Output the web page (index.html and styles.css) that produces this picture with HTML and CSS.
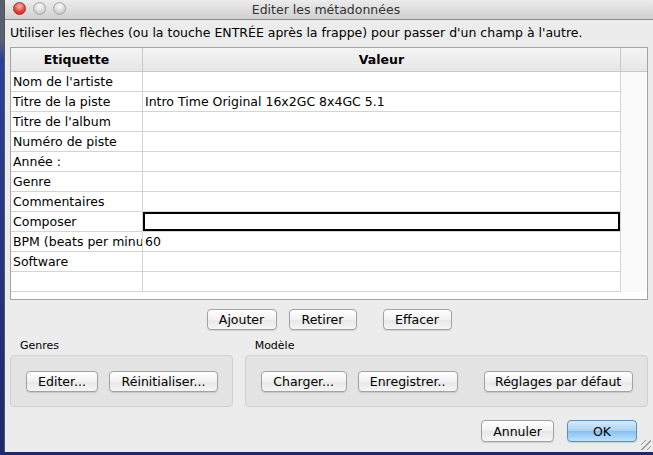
FILE: index.html
```html
<!DOCTYPE html>
<html lang="fr">
<head>
  <meta charset="UTF-8">
  <title>Editer les métadonnées</title>
  <link rel="stylesheet" href="styles.css">
</head>
<body>

<div class="window">
  <div class="titlebar">
    <div class="lights">
      <span class="light close"></span>
      <span class="light"></span>
      <span class="light"></span>
    </div>
    <div class="title">Editer les métadonnées</div>
    <div></div>
  </div>

  <div class="content">
    <p class="hint">Utiliser les flèches (ou la touche ENTRÉE après la frappe) pour passer d'un champ à l'autre.</p>

    <div class="grid-box">
      <table class="tags">
        <thead>
          <tr>
            <th class="col-label">Etiquette</th>
            <th class="col-value">Valeur</th>
            <th class="col-corner"></th>
          </tr>
        </thead>
        <tbody>
          <tr><td>Nom de l'artiste</td><td></td><td class="filler"></td></tr>
          <tr><td>Titre de la piste</td><td>Intro Time Original 16x2GC 8x4GC 5.1</td><td class="filler"></td></tr>
          <tr><td>Titre de l'album</td><td></td><td class="filler"></td></tr>
          <tr><td>Numéro de piste</td><td></td><td class="filler"></td></tr>
          <tr><td>Année :</td><td></td><td class="filler"></td></tr>
          <tr><td>Genre</td><td></td><td class="filler"></td></tr>
          <tr><td>Commentaires</td><td></td><td class="filler"></td></tr>
          <tr><td>Composer</td><td class="editing"></td><td class="filler"></td></tr>
          <tr><td>BPM (beats per minu</td><td>60</td><td class="filler"></td></tr>
          <tr><td>Software</td><td></td><td class="filler"></td></tr>
          <tr><td></td><td></td><td class="filler"></td></tr>
        </tbody>
      </table>
    </div>

    <div class="row-actions">
      <button class="btn w-ajouter">Ajouter</button>
      <button class="btn w-retirer">Retirer</button>
      <button class="btn w-effacer spaced">Effacer</button>
    </div>

    <div class="groups">
      <div class="group genres">
        <div class="group-label">Genres</div>
        <div class="group-box">
          <button class="btn w-editer">Editer...</button>
          <button class="btn w-reinit">Réinitialiser...</button>
        </div>
      </div>
      <div class="group modele">
        <div class="group-label">Modèle</div>
        <div class="group-box">
          <button class="btn w-charger">Charger...</button>
          <button class="btn w-enreg">Enregistrer..</button>
          <button class="btn w-defaut spaced">Réglages par défaut</button>
        </div>
      </div>
    </div>

    <div class="row-footer">
      <button class="btn w-annuler">Annuler</button>
      <button class="btn primary w-ok">OK</button>
    </div>
  </div>
  <div class="grip"></div>
</div>

</body>
</html>
```

FILE: styles.css
```css
body { margin: 0; background: linear-gradient(#5a5f70 0, #5a5f70 40px, #2d3f96 60px, #1c2a6a 100%); height: 455px; overflow: hidden; font-family: "DejaVu Sans", sans-serif; font-size: 12.5px; color: #000; }
.window { position: relative; margin-left: 4px; width: 649px; height: 452px; background: #ececec; border-left: 1px solid #555; box-sizing: border-box; }

.titlebar { height: 19px; border-bottom: 1px solid #8c8c8c; background: linear-gradient(#ececec, #d0d0d0); display: grid; grid-template-columns: 1fr auto 1fr; align-items: center; }
.lights { display: flex; gap: 7px; padding-left: 8px; margin-top: -3px; }
.light { width: 13px; height: 13px; border-radius: 50%; background: radial-gradient(circle at 50% 30%, #fdfdfd, #cfcfcf 70%, #b8b8b8); border: 1px solid #a8a8a8; box-sizing: border-box; }
.light.close { background: radial-gradient(circle at 50% 30%, #ffc0b8, #e5483a 55%, #b3261c); border-color: #a03228; }
.title { color: #333; font-size: 12.5px; padding-right: 6px; }

.content { padding: 0 5px 0 5px; }
.hint { margin: 0; height: 26px; line-height: 24px; padding-top: 1px; white-space: nowrap; }

.grid-box { border: 1px solid #a3a3a3; background: #fff; height: 251px; }
.tags { border-collapse: collapse; width: 100%; table-layout: fixed; }
.tags th { height: 23px; background: linear-gradient(#f4f4f4, #e6e6e6); border-bottom: 1px solid #c8c8c8; border-right: 1px solid #c8c8c8; font-weight: bold; padding: 0; }
.tags th.col-corner { border-right: none; }
.col-label { width: 131px; }
.col-value { width: 477px; }
.tags td { height: 19px; padding: 0 0 0 2px; border-bottom: 1px solid #d4d4d4; border-right: 1px solid #d4d4d4; white-space: nowrap; overflow: hidden; line-height: 19px; }
.tags td.filler { border: none; background: #fafafa; }
.tags td.editing { box-shadow: inset 0 0 0 2px #000; }

.btn { font-family: "DejaVu Sans", sans-serif; font-size: 12.5px; color: #000; height: 21px; padding: 0; border: 1px solid #a2a2a2; border-radius: 4px; background: linear-gradient(#ffffff, #f1f1f1 50%, #e6e6e6 51%, #f6f6f6); box-shadow: 0 1px 1px rgba(0,0,0,0.12); }
.btn.primary { background: linear-gradient(#d6ebfb, #a8d2f4 50%, #86c0ef 51%, #bfe2fb); border-color: #5f8fc2; }

.row-actions { display: flex; justify-content: center; gap: 12px; padding-top: 9px; }
.row-actions .spaced { margin-left: 14px; }
.w-ajouter { width: 70px; }
.w-retirer { width: 68px; }
.w-effacer { width: 69px; }

.groups { display: flex; gap: 12px; margin-top: 8px; }
.group-label { font-size: 11px; padding-left: 10px; height: 17px; line-height: 16px; }
.group-box { height: 52px; border: 1px solid #d0d0d0; border-radius: 4px; background: #e3e3e3; display: flex; align-items: center; gap: 11px; padding-left: 15px; box-sizing: border-box; }
.genres { width: 223px; }
.modele { width: 404px; }
.group-box .spaced { margin-left: 15px; }
.w-editer { width: 72px; }
.w-reinit { width: 109px; }
.w-charger { width: 86px; }
.w-enreg { width: 100px; }
.w-defaut { width: 149px; }

.row-footer { display: flex; justify-content: flex-end; gap: 13px; padding-right: 11px; margin-top: 13px; }
.w-annuler { width: 73px; height: 22px; }
.w-ok { width: 70px; height: 22px; }

.grip { position: absolute; right: 2px; bottom: 2px; width: 10px; height: 10px; background: repeating-linear-gradient(135deg, transparent 0 3px, #9a9a9a 3px 4px); }
```
